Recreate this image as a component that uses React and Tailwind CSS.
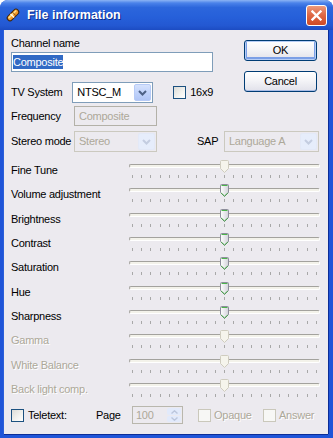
import React from "react";

const F = "font-['Liberation_Sans',Arial,sans-serif]";
const DIS = "text-[#aca899] [text-shadow:1px_1px_0_#ffffff]";

function Chevron({ color = "#4d6185" }) {
  return (
    <svg width="9" height="6" viewBox="0 0 9 6">
      <path d="M1 1 L4.5 4.5 L8 1" fill="none" stroke={color} strokeWidth="2" />
    </svg>
  );
}

function Select({ value, disabled, w }) {
  return (
    <div
      className={`flex h-[21px] items-stretch border ${w} ${
        disabled ? "border-[#cbc9bf] bg-[#eceaef]" : "border-[#7f9db9] bg-white"
      }`}
    >
      <div
        className={`flex flex-1 items-center pl-[4px] text-[11px] ${
          disabled ? "text-[#aca899]" : "text-black"
        }`}
      >
        {value}
      </div>
      <div
        className={`m-[1px] flex w-[17px] items-center justify-center rounded-[2px] border ${
          disabled
            ? "border-[#e3e9f7] bg-[#e6edfb]"
            : "border-[#b7cbf7] bg-[linear-gradient(180deg,#d6e2fd_0%,#c1d3fb_50%,#b1c6f6_100%)]"
        }`}
      >
        <Chevron color={disabled ? "#c4cde0" : "#4d6185"} />
      </div>
    </div>
  );
}

function Checkbox({ disabled }) {
  return (
    <div
      className={`h-[13px] w-[13px] shrink-0 border ${
        disabled
          ? "border-[#cac8bb] bg-[#f7f7f5]"
          : "border-[#1c5180] bg-[linear-gradient(135deg,#dcdcd7_0%,#f3f3f0_60%,#ffffff_100%)]"
      }`}
    />
  );
}

function Thumb({ on }) {
  return (
    <svg width="9" height="13" viewBox="0 0 9 13" className="absolute left-[94px] top-[2px]">
      <defs>
        <linearGradient id="thg" x1="0" x2="1" y1="0" y2="0">
          <stop offset="0" stopColor="#ffffff" />
          <stop offset="1" stopColor="#d2d2da" />
        </linearGradient>
      </defs>
      <path
        d="M0.5 1.5 Q0.5 0.5 1.5 0.5 H7.5 Q8.5 0.5 8.5 1.5 V8.5 L4.5 12.5 L0.5 8.5 Z"
        fill={on ? "url(#thg)" : "#f5f4ec"}
        stroke={on ? "#8c8c9a" : "#cfccbf"}
      />
      {on && <path d="M1.5 1.5 H7.5" stroke="#4cb34c" />}
      {on && <path d="M1.2 9 L4.5 12 L7.8 9" stroke="#39a339" fill="none" />}
    </svg>
  );
}

function SliderRow({ label, on, disabled }) {
  return (
    <div className="flex h-[24.33px] items-stretch">
      <div className={`flex w-[115px] items-center text-[11px] ${disabled ? DIS : "text-black"}`}>{label}</div>
      <div className="relative w-[197px] pt-[6px]">
        <div className="mx-[3px] h-[4px] rounded-[2px] border border-[#a3a29d] border-b-white border-r-white bg-[#f3f2ea]" />
        <div className="mx-[6px] mt-[7px] flex h-[3px] justify-between">
          {Array.from({ length: 21 }).map((_, i) => (
            <div key={i} className="w-px bg-[#a8a8a8]" />
          ))}
        </div>
        <Thumb on={on} />
      </div>
    </div>
  );
}

function AppIcon() {
  return (
    <svg width="16" height="16" viewBox="0 0 16 16">
      <g transform="rotate(-45 8 8)">
        <rect x="1" y="5.2" width="14" height="5.6" rx="2.8" fill="#f39a2c" stroke="#3a2410" strokeWidth="1" />
        <rect x="2.5" y="6.3" width="11" height="1.6" rx="0.8" fill="#ffe28a" />
        <path d="M7 5.4 V10.6" stroke="#ffffff" strokeWidth="1.2" />
        <path d="M9.6 5.4 V10.6" stroke="#7a3d0a" strokeWidth="0.8" />
      </g>
    </svg>
  );
}

export default function App() {
  const sliders = [
    ["Fine Tune", false, false],
    ["Volume adjustment", true, false],
    ["Brightness", true, false],
    ["Contrast", true, false],
    ["Saturation", true, false],
    ["Hue", true, false],
    ["Sharpness", true, false],
    ["Gamma", false, true],
    ["White Balance", false, true],
    ["Back light comp.", false, true],
  ];
  return (
    <div className={`h-[438px] w-[333px] bg-white ${F}`}>
      <div className="flex h-[438px] w-[333px] flex-col overflow-hidden rounded-t-[8px] bg-[#1f55d8]">
        {/* title bar */}
        <div className="flex h-[30px] shrink-0 items-center bg-[linear-gradient(180deg,#8cb4f4_0%,#4a82ea_10%,#2c66dc_25%,#2660da_55%,#2358d2_85%,#1c4cc2_100%)] pl-[5px] pr-[6px]">
          <AppIcon />
          <div className="ml-[6px] flex-1 text-[12.5px] font-bold text-white [text-shadow:1px_1px_0_#0c2a8a]">
            File information
          </div>
          <div className="flex h-[21px] w-[21px] items-center justify-center rounded-[3px] border border-white bg-[linear-gradient(180deg,#eb9a7c_0%,#df6a47_45%,#cf4a26_100%)]">
            <svg width="11" height="11" viewBox="0 0 11 11">
              <path d="M1.5 1.5 L9.5 9.5 M9.5 1.5 L1.5 9.5" stroke="#fff" strokeWidth="2.3" strokeLinecap="square" />
            </svg>
          </div>
        </div>
        {/* client area */}
        <div className="ml-[4px] h-[404px] w-[324px] bg-[#eceaef] pl-[7px] pr-[5px] text-[11px] tracking-[-0.25px] text-black shadow-[1px_0_0_#0c2d97,-1px_0_0_#2b5fd9,0_1px_0_#0c2d97]">
          <div className="flex">
            <div className="flex w-[202px] flex-col pt-[7px]">
              <div className="h-[13px] leading-[13px]">Channel name</div>
              <div className="mt-[2px] flex h-[20px] items-center border border-[#7f9db9] bg-white pl-[1px]">
                <span className="bg-[#316ac5] text-[11px] leading-[14px] text-white">Composite</span>
              </div>
              <div className="mt-[10px] flex h-[21px] items-center">
                <div className="w-[63px]">TV System</div>
                <Select value="NTSC_M" w="w-[83px]" />
                <div className="ml-[20px] flex items-center gap-[4px]">
                  <Checkbox />
                  <span>16x9</span>
                </div>
              </div>
            </div>
            <div className="ml-[31px] mt-[10px] flex flex-col gap-[10px]">
              <button className="flex h-[21px] w-[73px] items-center justify-center rounded-[3px] border border-[#003c74] bg-[linear-gradient(180deg,#ffffff_0%,#f4f4f7_45%,#e1e1ea_100%)] text-[11px] shadow-[inset_0_0_0_1px_#b6cdf5,inset_0_-1px_0_2px_#7b9fe6]">
                OK
              </button>
              <button className="flex h-[21px] w-[73px] items-center justify-center rounded-[3px] border border-[#003c74] bg-[linear-gradient(180deg,#ffffff_0%,#f4f4f7_45%,#e1e1ea_100%)] text-[11px] shadow-[inset_0_1px_0_#ffffff,inset_0_-1px_0_#a9bde6]">
                Cancel
              </button>
            </div>
          </div>
          <div className="mt-[3px] flex h-[20px] items-center">
            <div className="w-[63px]">Frequency</div>
            <div className="flex h-[20px] w-[83px] items-center border border-[#b3b1a8] pl-[4px] text-[#aca899]">Composite</div>
          </div>
          <div className="mt-[5px] flex h-[21px] items-center">
            <div className="w-[63px]">Stereo mode</div>
            <Select value="Stereo" disabled w="w-[83px]" />
            <div className="ml-[40px] w-[27px]">SAP</div>
            <Select value="Language A" disabled w="w-[95px]" />
          </div>
          <div className="mt-[6px] flex flex-col">
            {sliders.map(([l, on, d]) => (
              <SliderRow key={l} label={l} on={on} disabled={d} />
            ))}
          </div>
          <div className="mt-[5px] flex h-[18px] items-center">
            <div className="flex w-[85px] items-center gap-[4px]">
              <Checkbox />
              <span>Teletext:</span>
            </div>
            <div className="w-[36px]">Page</div>
            <div className="flex h-[18px] w-[51px] items-stretch border border-[#b9b7ad]">
              <div className="flex flex-1 items-center pl-[3px] text-[#aca899]">100</div>
              <div className="flex w-[15px] flex-col gap-px py-px pr-px">
                <div className="flex flex-1 items-center justify-center rounded-[2px] bg-[#e2eafb]">
                  <svg width="7" height="4" viewBox="0 0 7 4"><path d="M0.5 3.5 L3.5 0.8 L6.5 3.5" fill="none" stroke="#bcc6dc" strokeWidth="1.4" /></svg>
                </div>
                <div className="flex flex-1 items-center justify-center rounded-[2px] bg-[#e2eafb]">
                  <svg width="7" height="4" viewBox="0 0 7 4"><path d="M0.5 0.5 L3.5 3.2 L6.5 0.5" fill="none" stroke="#bcc6dc" strokeWidth="1.4" /></svg>
                </div>
              </div>
            </div>
            <div className="ml-[15px] flex w-[65px] items-center gap-[3px]">
              <Checkbox disabled />
              <span className={DIS}>Opaque</span>
            </div>
            <div className="flex items-center gap-[3px]">
              <Checkbox disabled />
              <span className={DIS}>Answer</span>
            </div>
          </div>
        </div>
      </div>
    </div>
  );
}
